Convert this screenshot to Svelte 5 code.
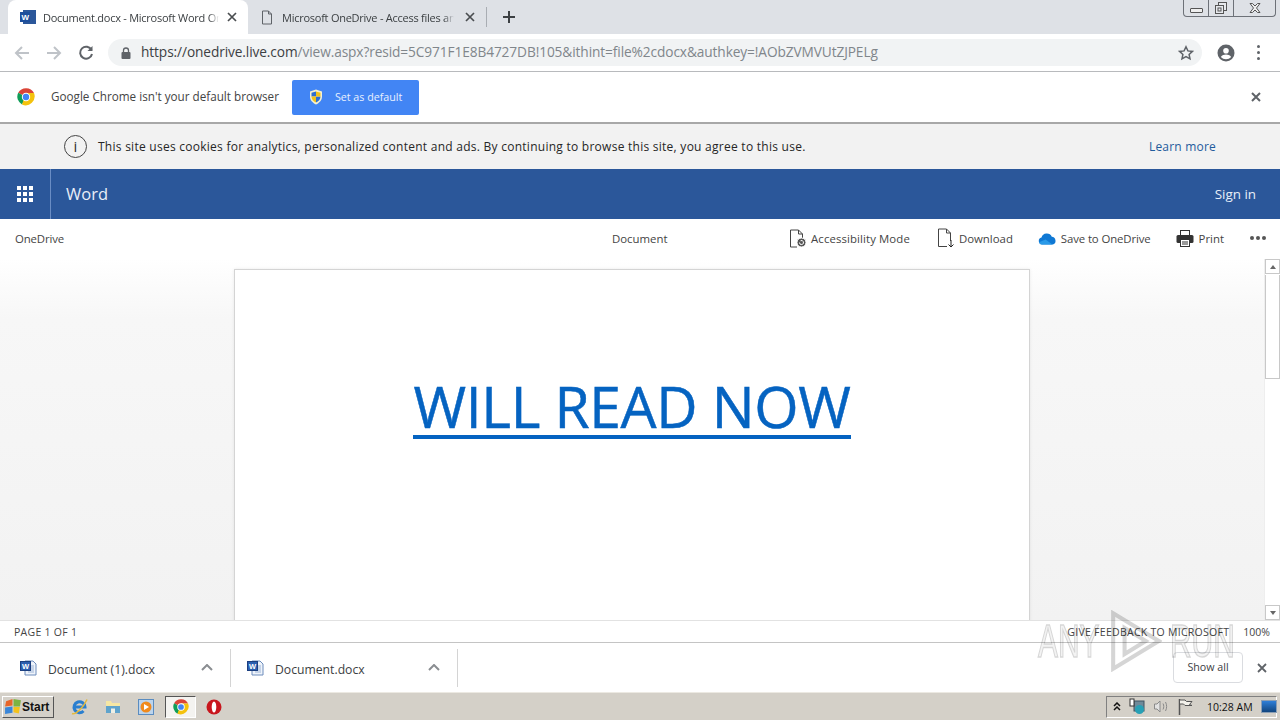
<script>
  const commands = [
    { label: 'Accessibility Mode', icon: 'access' },
    { label: 'Download', icon: 'download' },
    { label: 'Save to OneDrive', icon: 'cloud' },
    { label: 'Print', icon: 'print' }
  ];
  const downloads = ['Document (1).docx', 'Document.docx'];
</script>

<div class="screen">
  <!-- chrome tabs -->
  <div class="tabstrip">
    <div class="tab active">
      <svg class="favicon" width="18" height="16" viewBox="0 0 18 16">
        <rect x="4" y="1" width="13" height="14" fill="#2b579a" />
        <rect x="1" y="3" width="10" height="10" fill="#1d4f9c" />
        <text x="2.500" y="11" class="w-mark">W</text>
      </svg>
      <span class="tab-title">Document.docx - Microsoft Word On</span>
      <svg class="tab-x" width="10" height="10" viewBox="0 0 10 10"><path d="M1 1l8 8M9 1l-8 8" /></svg>
    </div>
    <div class="tab">
      <svg class="favicon" width="12" height="15" viewBox="0 0 12 15" fill="none" stroke="#5f6368"><path d="M1.500 1h6l3 3v10h-9zM7.500 1v3h3" /></svg>
      <span class="tab-title">Microsoft OneDrive - Access files an</span>
      <svg class="tab-x" width="10" height="10" viewBox="0 0 10 10"><path d="M1 1l8 8M9 1l-8 8" /></svg>
    </div>
    <div class="tab-sep"></div>
    <svg class="new-tab" width="12" height="12" viewBox="0 0 12 12"><path d="M6 0v12M0 6h12" /></svg>
    <div class="win-controls">
      <div class="win-btn min"><span></span></div>
      <div class="win-btn restore">
        <svg width="14" height="14" viewBox="0 0 14 14" fill="#e6e8ec" stroke="#555"><rect x="4.500" y="1.500" width="8" height="8" /><rect x="1.500" y="4.500" width="8" height="8" /><rect x="4" y="7" width="3" height="3" /></svg>
      </div>
      <div class="win-btn close">
        <svg width="12" height="10" viewBox="0 0 12 10" fill="#eee" stroke="#555"><path d="M1 .5h2.500L6 3l2.500-2.500H11L7.500 5 11 9.500H8.500L6 7 3.500 9.500H1L4.500 5z" /></svg>
      </div>
    </div>
  </div>

  <!-- address bar -->
  <div class="toolbar">
    <svg class="nav" width="16" height="14" viewBox="0 0 16 14" fill="none" stroke="#bfc3c8" stroke-width="2"><path d="M15 7H2M8 1L2 7l6 6" /></svg>
    <svg class="nav" width="16" height="14" viewBox="0 0 16 14" fill="none" stroke="#bfc3c8" stroke-width="2"><path d="M1 7h13M8 1l6 6-6 6" /></svg>
    <svg class="nav" width="16" height="16" viewBox="0 0 16 16" fill="none" stroke="#5f6368" stroke-width="2"><path d="M13.500 5A6 6 0 1 0 14 9" /><path d="M14.500 1v5h-5z" fill="#5f6368" stroke="none" /></svg>
    <div class="omnibox">
      <svg width="10" height="12" viewBox="0 0 10 12"><rect x="0.500" y="5" width="9" height="7" rx="1" fill="#5f6368" /><path d="M2.500 5V3.500a2.500 2.500 0 0 1 5 0V5" fill="none" stroke="#5f6368" stroke-width="1.300" /></svg>
      <span class="url"><span class="host">https://onedrive.live.com</span>/view.aspx?resid=5C971F1E8B4727DB!105&amp;ithint=file%2cdocx&amp;authkey=!AObZVMVUtZJPELg</span>
      <svg class="star" width="16" height="16" viewBox="0 0 16 16" fill="none" stroke="#5f6368" stroke-width="1.500"><path d="M8 1.800l1.900 4.100 4.500.5-3.300 3 .9 4.400L8 11.600l-4 2.200.9-4.400-3.300-3 4.500-.5z" /></svg>
    </div>
    <svg class="avatar" width="18" height="18" viewBox="0 0 18 18"><circle cx="9" cy="9" r="8.500" fill="#5f6368" /><circle cx="9" cy="6.800" r="2.800" fill="#fff" /><path d="M3.800 13c1.400-2 3.200-2.600 5.200-2.600s3.800.6 5.200 2.600a7 7 0 0 1-10.400 0z" fill="#fff" /></svg>
    <div class="kebab"><i></i><i></i><i></i></div>
  </div>

  <!-- default browser infobar -->
  <div class="infobar">
    <svg width="18" height="18" viewBox="0 0 18 18">
      <path d="M9 9L1.200 4.700A9 9 0 0 1 17 5H9z" fill="#db4437" />
      <path d="M9 9l-4 7.500A9 9 0 0 1 1.200 4.700z" fill="#0f9d58" />
      <path d="M9 5h8a9 9 0 0 1-12 11.500z" fill="#f4c20d" />
      <circle cx="9" cy="9" r="4.200" fill="#fff" />
      <circle cx="9" cy="9" r="3.200" fill="#4285f4" />
    </svg>
    <span class="info-text">Google Chrome isn't your default browser</span>
    <div class="default-btn">
      <svg width="14" height="16" viewBox="0 0 14 16">
        <path d="M7 0.500l6 2v5c0 4-3 6.500-6 8-3-1.500-6-4-6-8v-5z" fill="#f5f1d0" />
        <path d="M7 2.500v5H2.500V3.800zM7 7.500h4.500c0 3-2 4.800-4.500 6z" fill="#2f6fd0" />
        <path d="M7 2.500l4.500 1.300v3.700H7zM7 7.500v6c-2.500-1.200-4.500-3-4.500-6z" fill="#f2c21a" />
      </svg>
      <span>Set as default</span>
    </div>
    <svg class="info-close" width="10" height="10" viewBox="0 0 10 10"><path d="M1 1l8 8M9 1l-8 8" /></svg>
  </div>

  <!-- cookie notice -->
  <div class="cookie">
    <div class="i-circle">i</div>
    <span class="cookie-text">This site uses cookies for analytics, personalized content and ads. By continuing to browse this site, you agree to this use.</span>
    <span class="learn">Learn more</span>
  </div>

  <!-- word header -->
  <div class="suite">
    <div class="waffle">
      <div class="waffle-grid">
        {#each Array(9) as _}<i></i>{/each}
      </div>
    </div>
    <span class="app-name">Word</span>
    <span class="signin">Sign in</span>
  </div>

  <!-- command bar -->
  <div class="commands">
    <span class="cmd-left">OneDrive</span>
    <span class="cmd-center">Document</span>
    <div class="cmd-right">
      {#each commands as c}
        <div class="cmd cmd-{c.icon}">
          {#if c.icon === 'access'}
            <svg width="18" height="19" viewBox="0 0 18 19" fill="none" stroke="#444"><path d="M8 18H1.500V1h8l4 4v4M9.500 1v4h4" /><circle cx="12.500" cy="13.500" r="4.500" fill="#555" stroke="#fff" /><path d="M10.500 13.500a2 2 0 1 0 1-1.700" stroke="#fff" /></svg>
          {:else if c.icon === 'download'}
            <svg width="18" height="20" viewBox="0 0 18 20" fill="none" stroke="#444"><path d="M10 18.500H1.500V1h8l4 4v8M9.500 1v4h4" /><path d="M14 12v7M11.500 16.500L14 19l2.500-2.500" stroke="#222" /></svg>
          {:else if c.icon === 'cloud'}
            <svg width="19" height="13" viewBox="0 0 19 13"><path d="M4 12.500A3.500 3.500 0 0 1 3.500 5.600 5.500 5.500 0 0 1 13.800 4.800 4 4 0 0 1 15 12.500z" fill="#0f78d4" /><path d="M4 12.500a3 3 0 0 1-3-2.200l6.500-2.800 7 5z" fill="#2a9ae8" /></svg>
          {:else}
            <svg width="18" height="17" viewBox="0 0 18 17"><rect x="4.500" y="0.500" width="9" height="6" fill="#fff" stroke="#333" /><rect x="0.500" y="5" width="17" height="8" rx="1.500" fill="#333" /><rect x="4.500" y="9.500" width="9" height="7" fill="#fff" stroke="#333" /><path d="M6 12h6M6 14h6" stroke="#333" /></svg>
          {/if}
          <span>{c.label}</span>
        </div>
      {/each}
      <div class="dots"><i></i><i></i><i></i></div>
    </div>
  </div>

  <!-- document area -->
  <div class="doc-area">
    <div class="canvas">
      <div class="page">
        <span class="doc-link">WILL READ NOW</span>
      </div>
    </div>
    <div class="scrollbar">
      <div class="sb-btn"><span class="up"></span></div>
      <div class="sb-thumb"></div>
      <div class="sb-track"></div>
      <div class="sb-btn"><span class="down"></span></div>
    </div>
  </div>

  <!-- status bar -->
  <div class="status">
    <span>PAGE 1 OF 1</span>
    <span class="feedback">GIVE FEEDBACK TO MICROSOFT</span>
    <span class="zoom">100%</span>
  </div>

  <!-- downloads shelf -->
  <div class="shelf">
    {#each downloads as d}
      <div class="dl">
        <svg width="17" height="16" viewBox="0 0 17 16">
          <path d="M5 1h8l3 3v11H5z" fill="#eef3fa" stroke="#6c8cbc" />
          <path d="M8 6h6M8 8h6M8 10h6M8 12h6" stroke="#9db4d6" />
          <rect x="0.500" y="1.500" width="10" height="9" fill="#2b5fb0" stroke="#1b3f80" />
          <text x="2" y="9" class="w-mark small">W</text>
        </svg>
        <span class="dl-name">{d}</span>
        <svg class="chev" width="12" height="7" viewBox="0 0 12 7" fill="none" stroke="#8a8d91" stroke-width="2"><path d="M1 6l5-5 5 5" /></svg>
      </div>
    {/each}
    <div class="shelf-right">
      <div class="show-all">Show all</div>
      <svg class="shelf-x" width="10" height="10" viewBox="0 0 10 10"><path d="M1 1l8 8M9 1l-8 8" /></svg>
    </div>
  </div>

  <!-- windows taskbar -->
  <div class="taskbar">
    <div class="start">
      <svg width="18" height="17" viewBox="0 0 17 16">
        <path d="M2 3l6-2v6l-7 1z" fill="#e8662a" />
        <path d="M9 1l7 1-1 6H9z" fill="#7cb342" />
        <path d="M1 9l7-1v6l-7 1z" fill="#3a86d8" />
        <path d="M9 8.500h6l-1 6-5-1z" fill="#f4c21a" />
      </svg>
      <span>Start</span>
    </div>
    <div class="quick">
      <svg width="17" height="17" viewBox="0 0 17 17"><path d="M3.500 9h10.500a5.500 5.500 0 1 0-1.500 4" fill="none" stroke="#2a7fd0" stroke-width="3" /><path d="M1 15.500c3 1.500 11-5 15-14" fill="none" stroke="#e5b93a" stroke-width="1.500" /></svg>
      <svg width="16" height="15" viewBox="0 0 16 15"><path d="M1 2h5l1 2h8v10H1z" fill="#f6e7a4" /><path d="M1 7h14v7H1z" fill="#5fa3cc" /><rect x="6" y="9.500" width="4" height="4.500" fill="#eef0e6" /></svg>
      <svg width="16" height="16" viewBox="0 0 16 16"><rect x="0.500" y="0.500" width="15" height="15" fill="#bcd4ec" stroke="#5a8cc0" /><circle cx="8" cy="8" r="5.500" fill="#f08a1d" /><path d="M6 5l5 3-5 3z" fill="#fff" /></svg>
      <div class="chrome-task">
        <svg width="16" height="16" viewBox="0 0 18 18">
          <path d="M9 9L1.200 4.700A9 9 0 0 1 17 5H9z" fill="#db4437" />
          <path d="M9 9l-4 7.500A9 9 0 0 1 1.200 4.700z" fill="#0f9d58" />
          <path d="M9 5h8a9 9 0 0 1-12 11.500z" fill="#f4c20d" />
          <circle cx="9" cy="9" r="4.200" fill="#fff" />
          <circle cx="9" cy="9" r="3.200" fill="#4285f4" />
        </svg>
      </div>
      <svg width="16" height="16" viewBox="0 0 16 16"><circle cx="8" cy="8" r="7.500" fill="#c8161d" /><ellipse cx="8" cy="8" rx="2.300" ry="5.500" fill="#fff" /></svg>
    </div>
    <div class="tray">
      <span class="tray-up">
        <svg width="8" height="9" viewBox="0 0 8 9" fill="none" stroke="#111" stroke-width="1.500"><path d="M1 4l3-3 3 3M1 8l3-3 3 3" /></svg>
      </span>
      <svg width="17" height="17" viewBox="0 0 17 17"><rect x="5" y="3" width="10" height="10" fill="#6f8a9a" stroke="#3f5260" /><rect x="1" y="1" width="4" height="7" fill="#fff" stroke="#333" /><circle cx="10.500" cy="11.500" r="4.500" fill="#27a0b5" /></svg>
      <svg width="17" height="15" viewBox="0 0 17 15" fill="none" stroke="#8a8a8a"><path d="M1.500 5h2.500l3-3v11l-3-3H1.500z" fill="#e2e2e2" /><path d="M10 4.500c1 2 1 4 0 6M12.500 3c1.500 3 1.500 6 0 9" /></svg>
      <svg width="16" height="17" viewBox="0 0 16 17" fill="none" stroke="#555"><path d="M2.500 1v16" stroke-width="1.500" /><path d="M3 2h5l1.500 1.500H15l-2.500 3 2.500 1H8L6.500 6H3" fill="#f3f1ea" /></svg>
      <span class="clock">10:28 AM</span>
      <div class="desktop-btn"></div>
    </div>
  </div>

  <!-- sandbox watermark laid over the page -->
  <div class="watermark">
    <span>ANY</span>
    <svg width="52" height="62" viewBox="0 0 62 76" fill="none" stroke="#000" stroke-width="5"><path d="M3 4l56 34-56 34zM3 22v32M17 22l26 16-26 16z" /></svg>
    <span>RUN</span>
  </div>
</div>

<style>
  :global(body) {
    margin: 0;
    overflow: hidden;
  }

  .screen {
    position: relative;
    width: 1280px;
    height: 720px;
    display: flex;
    flex-direction: column;
    overflow: hidden;
    background: #fff;
    color: #3c3c3c;
    font-family: "Open Sans", "Noto Sans", sans-serif;
    font-size: 12px;
  }

  svg {
    flex: none;
    display: block;
  }

  /* tabs */
  .tabstrip {
    height: 34px;
    flex: none;
    background: #dee1e6;
    display: flex;
    align-items: center;
    padding-left: 8px;
    position: relative;
  }

  .tab {
    width: 240px;
    height: 34px;
    box-sizing: border-box;
    display: flex;
    align-items: center;
    gap: 6px;
    padding: 0 11px;
    font-size: 11px;
    color: #3c4043;
  }

  .tab.active {
    background: #fff;
    border-radius: 8px 8px 0 0;
  }

  .tab:not(.active) {
    width: 238px;
    padding-left: 13px;
    gap: 9px;
  }

  .tab-title {
    flex: 1;
    min-width: 0;
    white-space: nowrap;
    letter-spacing: -0.25px;
    mask-image: linear-gradient(to right, #000 calc(100% - 10px), transparent);
  }

  .tab-x {
    stroke: #4a4d50;
    stroke-width: 1.700;
    margin-left: 2px;
  }

  .w-mark {
    font-family: "Liberation Sans", sans-serif;
    font-size: 8px;
    font-weight: 700;
    fill: #fff;
  }

  .w-mark.small {
    font-size: 7.500px;
  }

  .tab-sep {
    width: 1px;
    height: 20px;
    background: #a9adb3;
  }

  .new-tab {
    margin-left: 16px;
    stroke: #3c4043;
    stroke-width: 2;
  }

  .win-controls {
    margin-left: auto;
    margin-right: 4px;
    align-self: flex-start;
    height: 16px;
    display: flex;
    border: 1px solid #6d7178;
    border-top: none;
    border-radius: 0 0 4px 4px;
  }

  .win-btn {
    height: 16px;
    display: flex;
    align-items: center;
    justify-content: center;
  }

  .win-btn + .win-btn {
    border-left: 1px solid #6d7178;
  }

  .win-btn.min {
    width: 24px;
  }

  .win-btn.min span {
    width: 11px;
    height: 3px;
    margin-top: 5px;
    border: 1px solid #555;
    border-radius: 1px;
    background: #eee;
  }

  .win-btn.restore {
    width: 24px;
  }

  .win-btn.close {
    width: 41px;
  }

  /* address bar */
  .toolbar {
    height: 37px;
    flex: none;
    box-sizing: border-box;
    display: flex;
    align-items: center;
    padding-left: 14px;
    background: #fff;
  }

  .nav {
    margin-right: 16px;
  }

  .toolbar .nav:nth-child(3) {
    margin-right: 14px;
  }

  .omnibox {
    width: 1094px;
    height: 27px;
    flex: none;
    box-sizing: border-box;
    border-radius: 14px;
    background: #f1f3f4;
    display: flex;
    align-items: center;
    padding: 0 8px 0 13px;
    gap: 10px;
  }

  .url {
    flex: 1;
    margin-top: -2px;
    font-size: 13.700px;
    color: #80868b;
    white-space: nowrap;
    overflow: hidden;
    letter-spacing: -0.1px;
  }

  .host {
    color: #3c4043;
  }

  .avatar {
    margin-left: 15px;
  }

  .kebab {
    margin-left: 22px;
    display: flex;
    flex-direction: column;
    gap: 3px;
  }

  .kebab i {
    width: 3px;
    height: 3px;
    border-radius: 50%;
    background: #5f6368;
  }

  /* infobar */
  .infobar {
    height: 53px;
    flex: none;
    box-sizing: border-box;
    border-top: 1px solid #b8babd;
    border-bottom: 2px solid #a8a8a8;
    display: flex;
    align-items: center;
    padding-left: 17px;
  }

  .info-text {
    margin-left: 16px;
    margin-top: -2px;
    color: #444;
    font-size: 11.700px;
  }

  .default-btn {
    margin-left: 13px;
    width: 127px;
    height: 35px;
    box-sizing: border-box;
    background: #4285f4;
    border-radius: 2px;
    color: #e8f0fe;
    display: flex;
    align-items: center;
    gap: 12px;
    padding-left: 17px;
    font-size: 10.700px;
  }

  .default-btn span {
    margin-top: -1px;
  }

  .info-close {
    margin-left: auto;
    margin-right: 19px;
    stroke: #5f6368;
    stroke-width: 2;
  }

  /* cookie notice */
  .cookie {
    height: 45px;
    flex: none;
    background: #f2f2f2;
    display: flex;
    align-items: center;
    padding-left: 64px;
    padding-right: 64px;
    color: #262626;
  }

  .i-circle {
    width: 21px;
    height: 21px;
    border: 1.500px solid #444;
    border-radius: 50%;
    text-align: center;
    line-height: 21px;
    font-size: 15px;
    color: #333;
  }

  .cookie-text {
    margin-left: 11px;
    letter-spacing: 0.26px;
  }

  .learn {
    margin-left: auto;
    color: #1f5b9c;
    letter-spacing: 0.2px;
  }

  /* word header */
  .suite {
    height: 50px;
    flex: none;
    background: #2b579a;
    color: #fff;
    display: flex;
    align-items: center;
  }

  .waffle {
    width: 51px;
    height: 50px;
    box-sizing: border-box;
    border-right: 1px solid #6a8dc4;
    display: flex;
    align-items: center;
    justify-content: center;
  }

  .waffle-grid {
    display: grid;
    grid-template-columns: repeat(3, 4px);
    gap: 2px;
  }

  .waffle-grid i {
    width: 4px;
    height: 4px;
    background: #fff;
  }

  .app-name {
    margin-left: 15px;
    margin-top: -2px;
    font-size: 16.500px;
    color: #e8eef8;
  }

  .signin {
    margin-left: auto;
    margin-right: 24px;
    font-size: 13.400px;
    color: #e8eef8;
  }

  /* command bar */
  .commands {
    height: 40px;
    flex: none;
    box-sizing: border-box;
    padding-bottom: 2px;
    position: relative;
    display: flex;
    align-items: center;
    padding-left: 15px;
    font-size: 11.400px;
    color: #444;
  }

  .cmd-left {
    letter-spacing: -0.15px;
  }

  .cmd-center {
    position: absolute;
    left: 612px;
  }

  .cmd-right {
    margin-left: auto;
    display: flex;
    align-items: center;
    margin-right: 14px;
  }

  .cmd {
    display: flex;
    align-items: center;
    gap: 4px;
    margin-right: 25px;
  }

  .cmd-access {
    margin-right: 27px;
    letter-spacing: 0.1px;
  }

  .cmd-cloud {
    letter-spacing: -0.12px;
  }

  .cmd-print {
    gap: 5px;
  }

  .dots {
    display: flex;
    gap: 2px;
    margin-left: 1px;
  }

  .dots i {
    width: 4px;
    height: 4px;
    border-radius: 50%;
    background: #555;
  }

  /* document */
  .doc-area {
    flex: 1;
    min-height: 0;
    display: flex;
  }

  .canvas {
    flex: 1;
    padding-top: 10px;
    display: flex;
    justify-content: center;
    overflow: hidden;
    background: linear-gradient(#fff 0, #f7f7f7 60px, #f2f2f2 100%);
  }

  .page {
    width: 796px;
    height: 600px;
    box-sizing: border-box;
    background: #fff;
    border: 1px solid #d4d4d4;
    box-shadow: 0 0 3px rgba(0, 0, 0, 0.08);
    display: flex;
    justify-content: center;
    align-items: flex-start;
    padding-top: 100px;
  }

  .doc-link {
    font-family: "Open Sans", sans-serif;
    font-size: 57px;
    line-height: 72px;
    height: 65px;
    padding: 0 1px;
    color: #0563c1;
    border-bottom: 4px solid #0563c1;
    letter-spacing: -0.38px;
    -webkit-text-stroke: 0.5px #0563c1;
  }

  .scrollbar {
    width: 16px;
    flex: none;
    background: #fff;
    display: flex;
    flex-direction: column;
    border-left: 1px solid #eee;
    box-sizing: border-box;
  }

  .sb-btn {
    height: 15px;
    flex: none;
    border: 1px solid #c8c8c8;
    background: #fff;
    display: flex;
    align-items: center;
    justify-content: center;
    box-sizing: border-box;
  }

  .up,
  .down {
    width: 0;
    height: 0;
    border-left: 3px solid transparent;
    border-right: 3px solid transparent;
  }

  .up {
    border-bottom: 4px solid #666;
  }

  .down {
    border-top: 4px solid #666;
  }

  .sb-thumb {
    height: 104px;
    flex: none;
    border: 1px solid #c8c8c8;
    border-top: none;
    background: #fff;
    box-sizing: border-box;
    margin-top: 1px;
  }

  .sb-track {
    flex: 1;
  }

  /* status */
  .status {
    height: 23px;
    flex: none;
    box-sizing: border-box;
    border-top: 1px solid #e2e2e2;
    border-bottom: 1px solid #c4c4c4;
    display: flex;
    align-items: center;
    padding: 0 10px 0 14px;
    font-size: 10.500px;
    letter-spacing: 0.28px;
    color: #444;
  }

  .feedback {
    margin-left: auto;
  }

  .zoom {
    margin-left: 14px;
    letter-spacing: 0;
  }

  /* downloads */
  .shelf {
    height: 49px;
    flex: none;
    display: flex;
    align-items: center;
    padding-left: 4px;
    background: #fff;
  }

  .dl {
    width: 227px;
    height: 38px;
    box-sizing: border-box;
    display: flex;
    align-items: center;
    padding-left: 16px;
    border-right: 1px solid #d4d4d4;
    color: #3c4043;
  }

  .dl-name {
    margin-left: 11px;
    margin-top: 4px;
    flex: 1;
    font-size: 12.200px;
  }

  .chev {
    margin-right: 17px;
  }

  .shelf-right {
    margin-left: auto;
    display: flex;
    align-items: center;
  }

  .show-all {
    width: 70px;
    height: 31px;
    box-sizing: border-box;
    padding-bottom: 2px;
    border: 1px solid #dadce0;
    border-radius: 4px;
    display: flex;
    align-items: center;
    justify-content: center;
    font-size: 10.700px;
    color: #3c4043;
    background: #fff;
  }

  .shelf-x {
    margin: 0 13px 0 14px;
    stroke: #5f6368;
    stroke-width: 1.800;
  }

  /* taskbar */
  .taskbar {
    height: 28px;
    flex: none;
    box-sizing: border-box;
    background: #d4d0c8;
    border-top: 1px solid #ece9e2;
    display: flex;
    align-items: center;
    padding-left: 2px;
  }

  .start {
    width: 52px;
    height: 22px;
    box-sizing: border-box;
    border: 1px solid;
    border-color: #fff #555 #555 #fff;
    display: flex;
    align-items: center;
    padding-left: 1px;
    font-family: "Liberation Sans", sans-serif;
    font-weight: 700;
    font-size: 12px;
    color: #111;
  }

  .quick {
    display: flex;
    align-items: center;
    margin-left: 17px;
    gap: 17px;
  }

  .chrome-task {
    width: 31px;
    height: 22px;
    box-sizing: border-box;
    margin: 0 -7px 0 -6px;
    border: 1px solid;
    border-color: #555 #fff #fff #555;
    background: #f4f3f0;
    display: flex;
    align-items: center;
    justify-content: center;
  }

  .tray {
    margin-left: auto;
    margin-right: 3px;
    width: 171px;
    height: 22px;
    box-sizing: border-box;
    border: 1px solid;
    border-color: #808080 #fff #fff #808080;
    display: flex;
    align-items: center;
    padding-left: 6px;
    gap: 7px;
  }

  .tray-up {
    margin-right: 1px;
  }

  .clock {
    margin-left: 7px;
    font-size: 10.500px;
    color: #111;
    white-space: nowrap;
  }

  .desktop-btn {
    width: 16px;
    height: 13px;
    flex: none;
    box-sizing: border-box;
    margin-left: 1px;
    border: 1px solid #8c9fb4;
    background: linear-gradient(#2f7fd8, #12467f);
  }

  /* sandbox watermark */
  .watermark {
    position: absolute;
    left: 1038px;
    top: 610px;
    height: 60px;
    display: grid;
    grid-template-columns: 72px 60px 64px;
    align-items: center;
    opacity: 0.16;
    font-family: "Liberation Sans", sans-serif;
    font-size: 46px;
    color: rgba(0, 0, 0, 0.3);
    -webkit-text-stroke: 1.500px #000;
    pointer-events: none;
  }

  .watermark span {
    transform: scaleX(0.65);
    transform-origin: left center;
    white-space: nowrap;
  }
</style>
